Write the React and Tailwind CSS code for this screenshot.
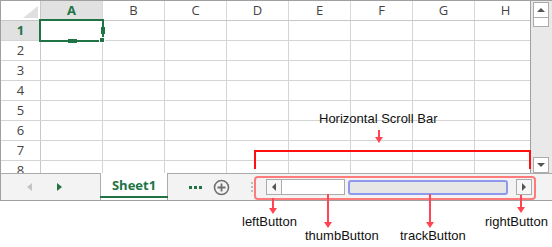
import React from 'react';

const COLS = ['A', 'B', 'C', 'D', 'E', 'F', 'G', 'H'];
const ROWS = [1, 2, 3, 4, 5, 6, 7, 8];

function Arrow({ x, top, bottom }) {
  // red pointer line with small head
  return (
    <div className="absolute" style={{ left: x - 4, top, height: bottom - top, width: 9 }}>
      <div className="absolute left-[3px] top-0 bottom-[4px] w-[2px] bg-[#ff4553]" />
      <div className="absolute left-0 bottom-0 w-0 h-0 border-l-[4px] border-r-[4px] border-t-[6px] border-l-transparent border-r-transparent border-t-[#ff4553]" />
    </div>
  );
}

export default function App() {
  return (
    <div
      className="relative w-[552px] h-[247px] bg-white overflow-hidden"
      style={{ fontFamily: '"Open Sans", "Noto Sans", sans-serif' }}
    >
      {/* spreadsheet window */}
      <div className="w-[552px] border-t border-l border-b border-[#a0a0a0]">
        <div className="flex h-[172px]">
          {/* grid */}
          <div className="w-[529px] overflow-hidden">
            <div className="flex h-[20px] border-b border-[#c8c8c8]">
              <div className="relative w-[40px] shrink-0 border-r border-[#c8c8c8]">
                <svg className="absolute left-[22px] top-[5px]" width="15" height="12" viewBox="0 0 15 12">
                  <polygon points="15,0 15,12 0,12" fill="#dfdfdf" />
                </svg>
              </div>
              {COLS.map((c) => (
                <div
                  key={c}
                  className={
                    'w-[62px] shrink-0 border-r border-[#d8d8d8] flex items-center justify-center text-[13px] leading-none ' +
                    (c === 'A' ? 'bg-[#e1e1e1] text-[#217346] font-bold' : 'text-[#444]')
                  }
                >
                  {c}
                </div>
              ))}
            </div>
            {ROWS.map((r) => (
              <div key={r} className="flex h-[20px] border-b border-[#d4d4d4]">
                <div
                  className={
                    'w-[40px] shrink-0 border-r border-[#c8c8c8] flex items-center justify-center text-[13px] leading-none ' +
                    (r === 1 ? 'bg-[#e1e1e1] text-[#217346] font-bold' : 'text-[#444]')
                  }
                >
                  {r}
                </div>
                {COLS.map((c) => (
                  <div key={c} className="w-[62px] shrink-0 border-r border-[#d4d4d4]" />
                ))}
              </div>
            ))}
          </div>
          {/* vertical scroll bar */}
          <div className="w-[22px] border-l border-[#a0a0a0] bg-[#e9e9e9] flex flex-col justify-between items-start pl-[2px] pt-[1px]">
            <div className="flex flex-col">
              <div className="w-[16px] h-[16px] bg-white border border-[#ababab] flex items-center justify-center">
                <div className="w-0 h-0 border-l-[4px] border-r-[4px] border-b-[4px] border-l-transparent border-r-transparent border-b-[#555]" />
              </div>
              <div className="w-[16px] h-[10px] -mt-px bg-white border border-[#ababab]" />
            </div>
            <div className="w-[16px] h-[16px] bg-white border border-[#ababab] flex items-center justify-center">
              <div className="w-0 h-0 border-l-[4px] border-r-[4px] border-t-[4px] border-l-transparent border-r-transparent border-t-[#555]" />
            </div>
          </div>
        </div>

        {/* sheet tab bar */}
        <div className="flex items-center h-[27px] border-t border-[#ababab] bg-[#f3f3f3]">
          <div className="w-[99px] shrink-0 flex items-center">
            <div className="ml-[26px] w-0 h-0 border-t-[4px] border-b-[4px] border-r-[5px] border-t-transparent border-b-transparent border-r-[#c4c4c4]" />
            <div className="ml-[25px] w-0 h-0 border-t-[4px] border-b-[4px] border-l-[5px] border-t-transparent border-b-transparent border-l-[#217346]" />
          </div>
          <div className="w-[68px] shrink-0 self-stretch -mt-px bg-white border-l border-r border-[#ababab] flex flex-col">
            <div className="flex-1 flex items-center justify-center text-[13px] font-bold text-[#217346] pt-[2px]">
              Sheet1
            </div>
            <div className="h-[2px] bg-[#217346] mb-[2px] -mx-px" />
          </div>
          <div className="ml-[21px] flex gap-[2px] items-center">
            <div className="w-[3px] h-[3px] bg-[#217346]" />
            <div className="w-[3px] h-[3px] bg-[#217346]" />
            <div className="w-[3px] h-[3px] bg-[#217346]" />
          </div>
          <svg className="ml-[11px]" width="17" height="17" viewBox="0 0 17 17">
            <circle cx="8.5" cy="8.5" r="7" fill="none" stroke="#6e6e6e" strokeWidth="1.6" />
            <path d="M8.5 4.5v8M4.5 8.5h8" stroke="#6e6e6e" strokeWidth="1.8" />
          </svg>
          <div className="ml-[21px] flex flex-col gap-[2px]">
            <div className="w-[2px] h-[2px] bg-[#bdbdbd]" />
            <div className="w-[2px] h-[2px] bg-[#bdbdbd]" />
            <div className="w-[2px] h-[2px] bg-[#bdbdbd]" />
          </div>
          {/* horizontal scroll bar */}
          <div className="ml-[13px] flex items-center h-[16px]">
            <div className="w-[16px] h-[16px] bg-[#f7f7f7] border border-[#ababab] flex items-center justify-center">
              <div className="w-0 h-0 border-t-[4px] border-b-[4px] border-r-[4px] border-t-transparent border-b-transparent border-r-[#555]" />
            </div>
            <div className="w-[64px] h-[16px] -ml-px bg-white border border-[#ababab]" />
            <div className="ml-[3px] w-[160px] h-[15px] rounded-[3px] bg-[#e6e6e6] border-2 border-[#8e98ee]" />
            <div className="ml-[8px] w-[16px] h-[16px] bg-[#f7f7f7] border border-[#ababab] flex items-center justify-center">
              <div className="w-0 h-0 border-t-[4px] border-b-[4px] border-l-[4px] border-t-transparent border-b-transparent border-l-[#555]" />
            </div>
          </div>
        </div>
      </div>

      {/* selection overlay on A1 */}
      <div className="absolute left-[39px] top-[19px] w-[65px] h-[23px] border-2 border-[#217346]" />
      <div className="absolute left-[68px] top-[39px] w-[9px] h-[4px] bg-[#217346]" />
      <div className="absolute left-[101px] top-[27px] w-[4px] h-[7px] bg-[#217346]" />
      <div className="absolute left-[99px] top-[37px] w-[6px] h-[6px] bg-[#217346] border border-white" />

      {/* annotations */}
      <div
        className="absolute left-0 top-0 text-[13px] text-[#111] leading-none"
        style={{ fontFamily: '"Liberation Sans", Arial, sans-serif' }}
      >
        <span className="absolute left-[319px] top-[112px] whitespace-nowrap">Horizontal Scroll Bar</span>
        <span className="absolute left-[242px] top-[215px] whitespace-nowrap">leftButton</span>
        <span className="absolute left-[305px] top-[229px] whitespace-nowrap">thumbButton</span>
        <span className="absolute left-[400px] top-[229px] whitespace-nowrap">trackButton</span>
        <span className="absolute left-[485px] top-[215px] whitespace-nowrap">rightButton</span>
      </div>
      <Arrow x={379} top={130} bottom={143} />
      <div className="absolute left-[254px] top-[150px] w-[277px] h-[19px] border-t-2 border-l-2 border-r-2 border-[#ff1010]" />
      <div className="absolute left-[254px] top-[176px] w-[282px] h-[24px] rounded-[4px] border-2 border-[#ff7a7a]" />
      <Arrow x={273} top={198} bottom={214} />
      <Arrow x={328} top={194} bottom={228} />
      <Arrow x={430} top={194} bottom={228} />
      <Arrow x={521} top={195} bottom={213} />
    </div>
  );
}
